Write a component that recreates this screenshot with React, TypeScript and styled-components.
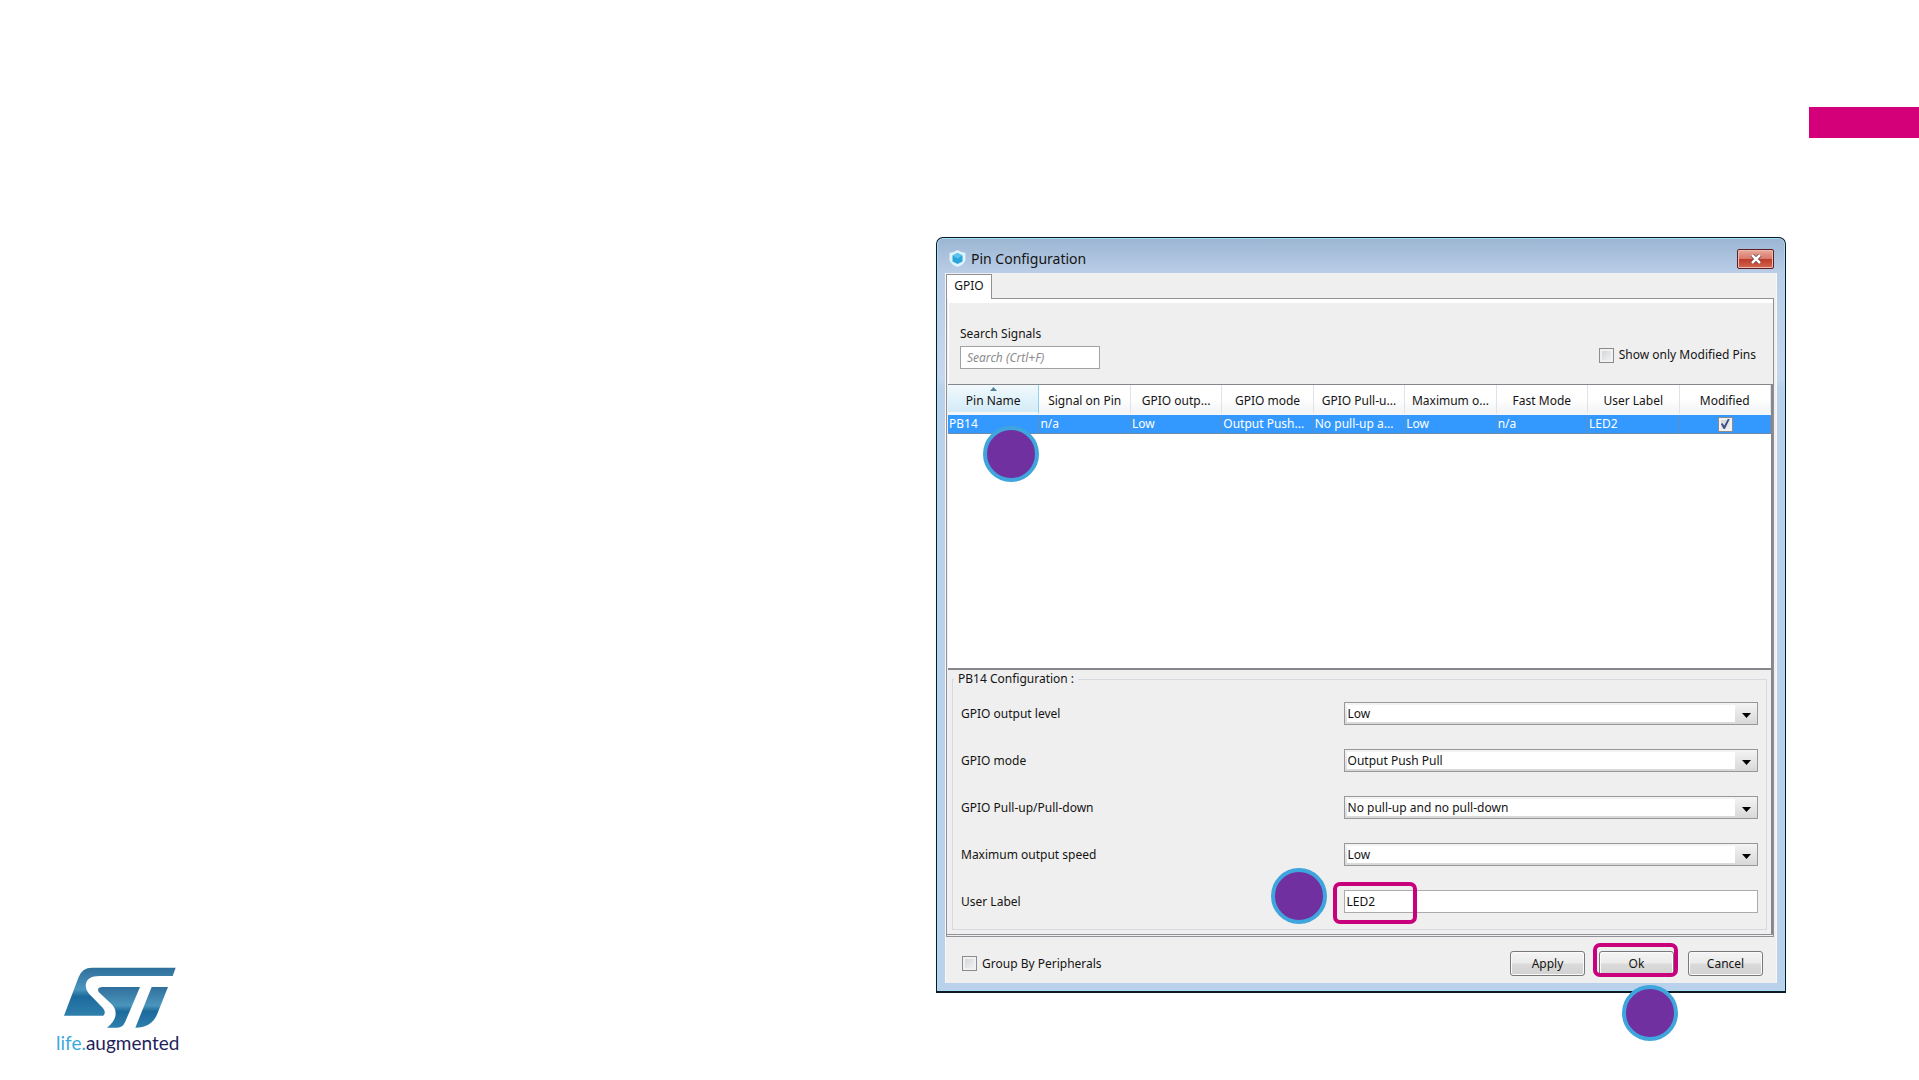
import React, { useState } from "react";
import styled, { createGlobalStyle } from "styled-components";

const GlobalStyle = createGlobalStyle`
  *, *::before, *::after { box-sizing: border-box; }
  body { margin: 0; background: #fff; }
  body, button, input, select, table {
    font-family: "Noto Sans", "DejaVu Sans", sans-serif;
    font-size: 12px;
    line-height: 18px;
    color: #141414;
  }
`;

const Slide = styled.main`
  min-height: 100vh;
  display: flex;
  flex-direction: column;
  gap: 99px;
  padding: 107px 0 26px;
`;

const AccentBar = styled.div`
  align-self: flex-end;
  width: 110px;
  height: 31px;
  background: #d4007a;
`;

const Body = styled.div`
  flex: 1;
  display: grid;
  grid-template-columns: minmax(140px, 1fr) minmax(0, 850px);
  padding: 0 133px 0 56px;
`;

const Brand = styled.div`
  align-self: end;
  justify-self: start;
  display: flex;
  flex-direction: column;
  align-items: flex-end;
  gap: 4px;
`;

const Tagline = styled.p`
  margin: 0;
  font-family: Lato, sans-serif;
  font-size: 19px;
  line-height: 22px;
  color: #1f1f5c;
`;

const TaglineStart = styled.span`
  color: #3aa9e0;
`;

const Window = styled.section`
  align-self: start;
  border: 1px solid #0d1a26;
  border-bottom-width: 2px;
  border-radius: 7px 7px 0 0;
  padding: 0 8px 8px 8px;
  background: linear-gradient(#9bb5d3, #b9cde6 34px, #c5d8ee 140px, #b9d1ea 150px);
  box-shadow: inset 0 0 0 1px #a6e0f5;
`;

const TitleBar = styled.header`
  height: 35px;
  display: flex;
  align-items: center;
  gap: 5px;
  padding: 6px 3px 0 4px;
`;

const Title = styled.h1`
  flex: 1;
  margin: 0;
  font-size: 14px;
  line-height: 20px;
  font-weight: 400;
`;

const CloseButton = styled.button`
  width: 37px;
  height: 20px;
  display: grid;
  place-items: center;
  padding: 0;
  border: 1px solid #5a1f24;
  border-radius: 2px;
  background: linear-gradient(#e9a99c, #d9796b 48%, #bd3a28 50%, #d2664f);
  box-shadow: inset 0 0 0 1px #eebbb0;
`;

const Client = styled.div`
  background: #efefef;
  border-left: 1px solid #f8f8f8;
  border-right: 1px solid #f8f8f8;
  padding: 1px 2px 0 0;
`;

const TabList = styled.div`
  display: flex;
`;

const TabSpacer = styled.div`
  flex: 1;
  border-bottom: 1px solid #8f9196;
`;

const Tab = styled.button`
  height: 25px;
  width: 46px;
  padding: 0 0 2px;
  border: 1px solid #8f9196;
  border-bottom: 0;
  background: #fff;
`;

const TabPanel = styled.div`
  border: 1px solid #8f9196;
  border-top: 0;
  border-bottom: 3px double #8f9196;
  padding: 0 0 0 1px;
`;

const Filters = styled.div`
  display: flex;
  justify-content: space-between;
  align-items: flex-end;
  padding: 22px 17px 15px 11px;
  border-top: 4px solid #fff;
  border-left: 1px solid #fff;
`;

const SearchField = styled.label`
  display: flex;
  flex-direction: column;
  gap: 3px;
`;

const SearchInput = styled.input`
  width: 140px;
  height: 23px;
  padding: 0 6px;
  border: 1px solid #a0a2a6;
  background: #fff;
  &::placeholder {
    color: #8c8c8c;
    font-style: italic;
    opacity: 1;
  }
`;

const CheckLabel = styled.label`
  display: flex;
  align-items: center;
  gap: 5px;
`;

const FilterCheck = styled(CheckLabel)`
  padding-bottom: 5px;
`;

const CheckBox = styled.input.attrs({ type: "checkbox" })`
  appearance: none;
  width: 15px;
  height: 15px;
  margin: 0;
  display: grid;
  place-items: center;
  border: 1px solid #8a8c90;
  background: linear-gradient(135deg, #cfd1d4, #f6f6f6);
  box-shadow: inset 0 0 0 2px #f1f1f1;
  &:checked::before {
    content: "";
    width: 9px;
    height: 10px;
    background: #3f4f86;
    clip-path: polygon(0 48%, 22% 42%, 38% 68%, 78% 0, 100% 0, 46% 100%, 32% 100%);
  }
`;

const TableArea = styled.div`
  min-height: 286px;
  background: #fff;
  border: 1px solid #85878c;
  border-bottom-width: 2px;
  border-right-width: 2px;
  border-left: 0;
`;

const Table = styled.table`
  width: 100%;
  table-layout: fixed;
  border-collapse: separate;
  border-spacing: 0;
`;

const HeadCell = styled.th<{ $sorted?: boolean }>`
  position: relative;
  height: 30px;
  padding: 5px 2px 0;
  font-weight: 400;
  text-align: center;
  white-space: nowrap;
  border-right: 1px solid ${(p) => (p.$sorted ? "#8fd0ee" : "#e2e3e6")};
  border-bottom: 3px solid #f4f7fa;
  background: ${(p) =>
    p.$sorted ? "linear-gradient(#f2f9fc, #e3f3fb 45%, #d3ebf7)" : "linear-gradient(#fff, #fff 50%, #f3f4f6)"};
`;

const SortMark = styled.svg`
  position: absolute;
  top: 2px;
  left: 50%;
  margin-left: -3px;
`;

const Cell = styled.td`
  height: 19px;
  padding: 0 0 0 1px;
  line-height: 16px;
  white-space: nowrap;
  color: #fff;
  background: #3399ff;
  border-right: 1px solid #5f8fc0;
  border-bottom: 1px solid #6d89a8;
`;

const CellCenter = styled.div`
  display: flex;
  justify-content: center;
`;

const BadgeAnchor = styled.div`
  position: relative;
`;

const Badge = styled.span<{ $left: string; $top: string }>`
  position: absolute;
  left: ${(p) => p.$left};
  top: ${(p) => p.$top};
  width: 56px;
  height: 56px;
  border: 4px solid #3fa5dc;
  border-radius: 50%;
  background: #7030a0;
`;

const Highlight = styled.span<{ $inset: string; $width: string }>`
  position: absolute;
  inset: ${(p) => p.$inset};
  width: ${(p) => p.$width};
  border: 4px solid #c8007c;
  border-radius: 7px;
  pointer-events: none;
`;

const ConfigArea = styled.div`
  padding: 0 4px 4px 4px;
  border-right: 2px solid #85878c;
`;

const ConfigGroup = styled.fieldset`
  margin: 0;
  min-width: 0;
  border: 1px solid #d6dade;
  padding: 14px 8px 16px 8px;
`;

const Legend = styled.legend`
  padding: 0 4px;
  margin-left: -7px;
`;

const FieldList = styled.div`
  display: grid;
  gap: 24px;
`;

const FieldRow = styled.div`
  display: grid;
  grid-template-columns: minmax(0, 383fr) minmax(0, 415fr);
  align-items: center;
  height: 23px;
`;

const SelectBox = styled.div`
  display: grid;
  grid-template-columns: 1fr 23px;
  height: 23px;
  border: 1px solid #96989c;
  background: linear-gradient(#f4f4f4, #d8d8d8);
  padding: 2px 1px 2px 2px;
`;

const Select = styled.select`
  grid-area: 1 / 1 / 2 / 3;
  appearance: none;
  width: 100%;
  min-width: 0;
  height: 17px;
  line-height: 17px;
  padding: 0 24px 0 1px;
  border: 0;
  border-radius: 0;
  background: linear-gradient(#fff, #fff) no-repeat left / calc(100% - 21px) 100%;
`;

const Arrow = styled.svg`
  grid-area: 1 / 2 / 2 / 3;
  align-self: center;
  justify-self: end;
  margin: 4px 5px 0 0;
  pointer-events: none;
`;

const TextInput = styled.input`
  display: block;
  width: 100%;
  height: 23px;
  padding: 0 2px;
  border: 1px solid #a9abaf;
  background: #fff;
`;

const Footer = styled.footer`
  display: flex;
  justify-content: space-between;
  align-items: center;
  padding: 14px 11px 7px 16px;
`;

const Actions = styled.div`
  display: flex;
  gap: 14px;
`;

const ActionButton = styled.button`
  display: block;
  width: 75px;
  height: 25px;
  padding: 0;
  border: 1px solid #77797d;
  border-radius: 3px;
  background: linear-gradient(#f4f4f4, #ebebeb 48%, #dadada 52%, #d2d2d2);
  box-shadow: inset 0 0 0 1px #fafafa;
`;

const StLogo = () => (
  <svg width="115" height="61" viewBox="72 52 345 183" role="img" aria-label="ST">
    <defs>
      <linearGradient id="stBlue" x1="0" y1="0" x2="0" y2="1">
        <stop offset="0" stopColor="#2f6f9b" />
        <stop offset="0.45" stopColor="#4b95bd" />
        <stop offset="0.6" stopColor="#1c6a9c" />
        <stop offset="1" stopColor="#2f80ad" />
      </linearGradient>
    </defs>
    <g fill="url(#stBlue)">
      <path d="M72 198 116 82Q127 54 156 54H407L398 79H180Q138 79 137 108Q137 120 147 132L188 174Q200 188 190 198Z" />
      <path d="M188 112H300L255 218Q248 234 232 234H201Q226 215 227 192Q227 176 215 164L176 127Q169 112 188 112Z" />
      <path d="M335 112H384L352 192Q336 234 286 234Z" />
    </g>
  </svg>
);

const AppIcon = () => (
  <svg width="17" height="17" viewBox="0 0 17 17" aria-hidden="true">
    <path d="M8.500 0 Q12 2.500 16.500 3V10Q15 15 8.500 17Q2 15 .5 10V3Q5 2.500 8.500 0Z" fill="#dff3fb" />
    <path d="M8.500 3 13.500 5.500V11.500L8.500 14 3.500 11.500V5.500Z" fill="#2ba3dd" />
    <path d="M8.500 3 13.500 5.500 8.500 8.500 3.500 5.500Z" fill="#5cc3ee" />
  </svg>
);

const columns = [
  { short: "Pin Name", full: "Pin Name" },
  { short: "Signal on Pin", full: "Signal on Pin" },
  { short: "GPIO outp...", full: "GPIO output level" },
  { short: "GPIO mode", full: "GPIO mode" },
  { short: "GPIO Pull-u...", full: "GPIO Pull-up/Pull-down" },
  { short: "Maximum o...", full: "Maximum output speed" },
  { short: "Fast Mode", full: "Fast Mode" },
  { short: "User Label", full: "User Label" },
  { short: "Modified", full: "Modified" },
];

const pin = ["PB14", "n/a", "Low", "Output Push...", "No pull-up a...", "Low", "n/a", "LED2"];

const settings = [
  { id: "level", label: "GPIO output level", options: ["Low", "High"] },
  { id: "mode", label: "GPIO mode", options: ["Output Push Pull", "Output Open Drain"] },
  { id: "pull", label: "GPIO Pull-up/Pull-down", options: ["No pull-up and no pull-down", "Pull-up", "Pull-down"] },
  { id: "speed", label: "Maximum output speed", options: ["Low", "Medium", "High"] },
];

export default function App() {
  const [userLabel, setUserLabel] = useState("LED2");
  return (
    <>
      <GlobalStyle />
      <Slide>
        <AccentBar />
        <Body>
          <Brand>
            <StLogo />
            <Tagline>
              <TaglineStart>life.</TaglineStart>augmented
            </Tagline>
          </Brand>
          <Window aria-labelledby="window-title">
            <TitleBar>
              <AppIcon />
              <Title id="window-title">Pin Configuration</Title>
              <CloseButton aria-label="Close">
                <svg width="12" height="10" viewBox="0 0 12 10" aria-hidden="true">
                  <path d="M2 1 10 9M10 1 2 9" stroke="#6b3535" strokeWidth="4" />
                  <path d="M2 1 10 9M10 1 2 9" stroke="#fff" strokeWidth="2.500" />
                </svg>
              </CloseButton>
            </TitleBar>
            <Client>
              <TabList role="tablist">
                <Tab role="tab" aria-selected="true">GPIO</Tab>
                <TabSpacer />
              </TabList>
              <TabPanel role="tabpanel">
                <Filters>
                  <SearchField>
                    Search Signals
                    <SearchInput placeholder="Search (Crtl+F)" />
                  </SearchField>
                  <FilterCheck>
                    <CheckBox />
                    Show only Modified Pins
                  </FilterCheck>
                </Filters>
                <TableArea>
                  <Table>
                    <thead>
                      <tr>
                        {columns.map((column, i) => (
                          <HeadCell key={column.full} $sorted={i === 0} title={column.full}>
                            {i === 0 && (
                              <SortMark width="7" height="4" viewBox="0 0 7 4" aria-hidden="true">
                                <path d="M0 4 3.500 0 7 4Z" fill="#4f8299" />
                              </SortMark>
                            )}
                            {column.short}
                          </HeadCell>
                        ))}
                      </tr>
                    </thead>
                    <tbody>
                      <tr>
                        {pin.map((value, i) => (
                          <Cell key={columns[i].full}>
                            {i === 0 ? (
                              <BadgeAnchor>
                                {value}
                                <Badge $left="34px" $top="10px" />
                              </BadgeAnchor>
                            ) : (
                              value
                            )}
                          </Cell>
                        ))}
                        <Cell>
                          <CellCenter>
                            <CheckBox defaultChecked aria-label="Modified" />
                          </CellCenter>
                        </Cell>
                      </tr>
                    </tbody>
                  </Table>
                </TableArea>
                <ConfigArea>
                  <ConfigGroup>
                    <Legend>PB14 Configuration :</Legend>
                    <FieldList>
                      {settings.map((s) => (
                        <FieldRow key={s.id}>
                          <label htmlFor={s.id}>{s.label}</label>
                          <SelectBox>
                            <Select id={s.id}>
                              {s.options.map((o) => (
                                <option key={o}>{o}</option>
                              ))}
                            </Select>
                            <Arrow width="9" height="5" viewBox="0 0 9 5" aria-hidden="true">
                              <path d="M0 0H9L4.500 5Z" fill="#000" />
                            </Arrow>
                          </SelectBox>
                        </FieldRow>
                      ))}
                      <FieldRow>
                        <label htmlFor="user-label">User Label</label>
                        <BadgeAnchor>
                          <TextInput
                            id="user-label"
                            value={userLabel}
                            onChange={(e) => setUserLabel(e.target.value)}
                          />
                          <Highlight $inset="-8px auto -11px -11px" $width="84px" />
                          <Badge $left="-73px" $top="-22px" />
                        </BadgeAnchor>
                      </FieldRow>
                    </FieldList>
                  </ConfigGroup>
                </ConfigArea>
              </TabPanel>
              <Footer>
                <CheckLabel>
                  <CheckBox />
                  Group By Peripherals
                </CheckLabel>
                <Actions>
                  <ActionButton>Apply</ActionButton>
                  <BadgeAnchor>
                    <ActionButton>Ok</ActionButton>
                    <Highlight $inset="-8px auto -1px -6px" $width="85px" />
                    <Badge $left="23px" $top="34px" />
                  </BadgeAnchor>
                  <ActionButton>Cancel</ActionButton>
                </Actions>
              </Footer>
            </Client>
          </Window>
        </Body>
      </Slide>
    </>
  );
}
